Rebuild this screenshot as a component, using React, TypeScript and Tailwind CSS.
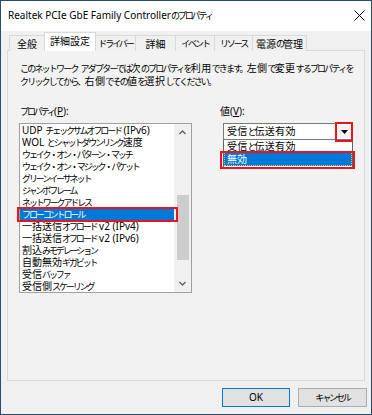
import React from "react";

const properties = [
  "UDP チェックサムオフロード (IPv6)",
  "WOL とシャットダウンリンク速度",
  "ウェイク・オン・パターン・マッチ",
  "ウェイク・オン・マジック・パケット",
  "グリーンイーサネット",
  "ジャンボフレーム",
  "ネットワークアドレス",
  "フローコントロール",
  "一括送信オフロード v2 (IPv4)",
  "一括送信オフロード v2 (IPv6)",
  "割込みモデレーション",
  "自動無効ギガビット",
  "受信バッファ",
  "受信側スケーリング",
];

const tabs = [
  { label: "全般", w: "w-[36px]" },
  { label: "詳細設定", w: "w-[52px]", active: true },
  { label: "ドライバー", w: "w-[41px]" },
  { label: "詳細", w: "w-[41px]" },
  { label: "イベント", w: "w-[40px]" },
  { label: "リソース", w: "w-[39px]" },
  { label: "電源の管理", w: "w-[55px]" },
];

// kana and punctuation are set narrower than kanji, like Meiryo UI
function J({ t, wide }: { t: string; wide?: boolean }) {
  const parts = t.split(/([\u3000-\u30ff\uff00-\uffef]+)/);
  return (
    <>
      {parts.map((p, i) =>
        i % 2 === 1 ? (
          <span key={i} className={wide ? "text-[9px] tracking-[-1.8px]" : "text-[9px] tracking-[-2.1px]"}>
            {p}
          </span>
        ) : (
          <span key={i}>{p}</span>
        )
      )}
    </>
  );
}

function Chevron({ down }: { down?: boolean }) {
  return (
    <svg width="7" height="5" viewBox="0 0 7 5" className={down ? "rotate-180" : ""}>
      <path d="M0.5 4 L3.5 1 L6.5 4" fill="none" stroke="#606060" strokeWidth="1.3" />
    </svg>
  );
}

export default function App() {
  return (
    <div className="w-[372px] h-[415px] bg-[#f0f0f0] border border-[#2c4b6a] flex flex-col text-[10px] text-black font-['Noto_Sans','Noto_Sans_CJK_JP',sans-serif] leading-[12px]">
      {/* Title bar */}
      <div className="h-[30px] bg-white flex items-center justify-between pl-[7px] pr-[6px] shrink-0">
        <span className="text-[10px] pb-[2px] whitespace-nowrap">
          <J t="Realtek PCIe GbE Family Controllerのプロパティ" />
        </span>
        <svg width="11" height="11" viewBox="0 0 11 11" className="mb-[2px]">
          <path d="M0.5 0.5 L10.5 10.5 M10.5 0.5 L0.5 10.5" stroke="#000" strokeWidth="1" />
        </svg>
      </div>

      <div className="flex flex-col pl-[6px] pt-[1px]">
        {/* Tabs */}
        <div className="flex items-end h-[19px] pl-[3px] relative z-10">
          {tabs.map((t) =>
            t.active ? (
              <div
                key={t.label}
                className={`${t.w} h-[19px] -ml-px bg-white border border-b-0 border-[#d9d9d9] flex items-center justify-center pb-[2px] whitespace-nowrap`}
              >
                <J t={t.label} />
              </div>
            ) : (
              <div
                key={t.label}
                className={`${t.w} h-[16px] -ml-px bg-[#f0f0f0] border border-b-0 border-[#d9d9d9] flex items-center justify-center whitespace-nowrap`}
              >
                <J t={t.label} />
              </div>
            )
          )}
        </div>

        {/* Panel */}
        <div className="w-[358px] h-[331px] -mt-px border border-[#d9d9d9] bg-[#f2f2f2] flex flex-col pl-[11px] pt-[11px]">
          <div className="pl-[1px] leading-[13px] whitespace-nowrap tracking-[0.4px]">
            <div>
              <J wide t="このネットワーク アダプターでは次のプロパティを利用できます。左側で変更するプロパティを" />
            </div>
            <div>
              <J wide t="クリックしてから、右側でその値を選択してください。" />
            </div>
          </div>

          <div className="flex mt-[17px]">
            {/* Left column */}
            <div className="flex flex-col w-[173px]">
              <div className="h-[13px] leading-[13px] pl-[1px] whitespace-nowrap">
                <J t="プロパティ" />(<span className="underline">P</span>):
              </div>
              <div className="mt-[5px] h-[170px] border border-[#a0a0a0] bg-white flex">
                <div className="flex-1 flex flex-col">
                  {properties.map((p) =>
                    p === "フローコントロール" ? (
                      <div key={p} className="relative h-[12px] bg-[#0078d7] text-white pl-[2px] whitespace-nowrap">
                        <J t={p} />
                        <div className="absolute left-[-3px] right-[-4px] top-[-1px] bottom-[-2px] border-2 border-[#e8151f]" />
                      </div>
                    ) : (
                      <div key={p} className="h-[12px] pl-[2px] whitespace-nowrap">
                        <J t={p} />
                      </div>
                    )
                  )}
                </div>
                <div className="w-[17px] bg-[#f0f0f0] flex flex-col">
                  <div className="h-[17px] flex items-center justify-center">
                    <Chevron />
                  </div>
                  <div className="flex-1 pt-[54px]">
                    <div className="ml-[3px] w-[12px] h-[65px] bg-[#cdcdcd]" />
                  </div>
                  <div className="h-[17px] flex items-center justify-center">
                    <Chevron down />
                  </div>
                </div>
              </div>
            </div>

            {/* Right column */}
            <div className="flex flex-col ml-[28px] w-[135px]">
              <div className="h-[13px] leading-[13px] whitespace-nowrap">
                値(<span className="underline">V</span>):
              </div>
              <div className="ml-[3px] mt-[5px] w-[130px] flex flex-col">
                <div className="h-[17px] border border-[#7a7a7a] bg-white flex items-center pl-[3px] relative">
                  <span className="flex-1 whitespace-nowrap tracking-[0.3px]">
                    <J t="受信と伝送有効" />
                  </span>
                  <div className="w-[14px] h-[13px] mr-px bg-[#f4f4f4] flex items-center justify-center relative">
                    <svg width="7" height="4" viewBox="0 0 7 4">
                      <path d="M0 0 H7 L3.5 4 Z" fill="#000" />
                    </svg>
                    <div className="absolute left-[-2px] right-[-2px] top-[-3px] bottom-[-4px] border-2 border-[#e8151f]" />
                  </div>
                </div>
                <div className="-mt-px border border-[#646464] bg-white flex flex-col pb-[2px]">
                  <div className="h-[12px] pl-[3px] leading-[12px] whitespace-nowrap tracking-[0.3px]">
                    <J t="受信と伝送有効" />
                  </div>
                  <div className="relative h-[14px] bg-[#0078d7] text-white pl-[3px] leading-[14px] outline-1 outline-dotted outline-[#f0c040] -outline-offset-1">
                    無効
                    <div className="absolute left-[-4px] right-[-3px] top-[-1px] bottom-[-3px] border-2 border-[#e8151f]" />
                  </div>
                </div>
              </div>
            </div>
          </div>
        </div>

        {/* Buttons */}
        <div className="flex justify-end gap-[8px] mt-[7px] pr-[4px]">
          <button className="w-[68px] h-[19px] border border-[#0078d7] bg-[#e1e1e1] text-[10px] leading-[17px]">
            OK
          </button>
          <button className="w-[69px] h-[19px] border border-[#adadad] bg-[#e1e1e1] text-[10px] leading-[17px] whitespace-nowrap">
            <J t="キャンセル" />
          </button>
        </div>
      </div>
    </div>
  );
}
